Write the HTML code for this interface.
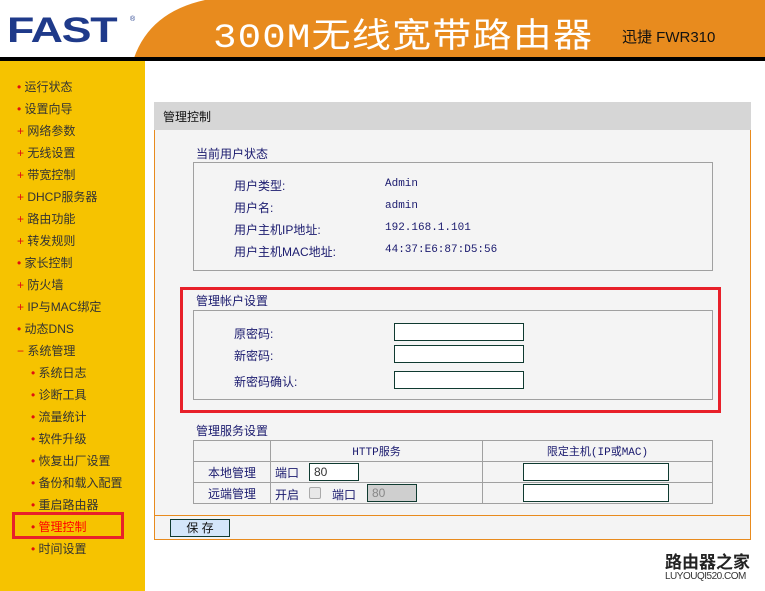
<!DOCTYPE html>
<html><head><meta charset="utf-8"><style>
*{margin:0;padding:0;box-sizing:border-box}
body{width:765px;height:591px;position:relative;background:#fff;font-family:"Liberation Sans","Noto Sans CJK SC",sans-serif;font-size:12px;overflow:hidden}
.a{position:absolute}
.nav{color:#333;font-size:12px}
.nav div{position:absolute;white-space:nowrap}
.dot{color:#e01010}
.t{color:#1a1a6e;font-size:12px;white-space:nowrap}
.mono{font-family:"Liberation Mono","Noto Sans CJK SC",monospace;font-size:11px;color:#1a1a6e}
.inp{position:absolute;background:#fff;border:1px solid #0f3a30;height:18px}
table{border-collapse:collapse}
td{border:1px solid #a0a0a0;height:21px;color:#1a1a6e;font-size:12px}
</style></head><body>
<!-- header -->
<div class="a" style="left:0;top:0;width:765px;height:58px;background:#e88b1e"></div>
<svg class="a" style="left:0;top:0" width="220" height="58"><path d="M0 0 H205 Q150 12 134 58 H0 Z" fill="#fff"/></svg>
<div class="a" style="left:7px;top:11px;font:bold 35px 'Liberation Sans',sans-serif;color:#1f3a8a;letter-spacing:-1px;transform:scaleX(1.28);transform-origin:left">FAST</div>
<div class="a" style="left:130px;top:16px;font-size:7px;color:#1f3a8a">®</div>
<div class="a" style="left:213px;top:8px;font-size:34px;color:#fff;font-family:'Liberation Mono','Noto Sans CJK SC',monospace;letter-spacing:1px;white-space:nowrap;transform:scaleX(1.15);transform-origin:left">300M无线宽带路由器</div>
<div class="a" style="left:622px;top:26px;font-size:15px;color:#111;white-space:nowrap">迅捷 FWR310</div>
<div class="a" style="left:0;top:57px;width:765px;height:4px;background:#000"></div>
<!-- sidebar -->
<div class="a" style="left:0;top:61px;width:145px;height:530px;background:#f6c300"></div>
<div class="nav">
<div style="left:17px;top:78px"><span class="dot">•</span> 运行状态</div>
<div style="left:17px;top:100px"><span class="dot">•</span> 设置向导</div>
<div style="left:17px;top:122px"><span class="dot">+</span> 网络参数</div>
<div style="left:17px;top:144px"><span class="dot">+</span> 无线设置</div>
<div style="left:17px;top:166px"><span class="dot">+</span> 带宽控制</div>
<div style="left:17px;top:188px"><span class="dot">+</span> DHCP服务器</div>
<div style="left:17px;top:210px"><span class="dot">+</span> 路由功能</div>
<div style="left:17px;top:232px"><span class="dot">+</span> 转发规则</div>
<div style="left:17px;top:254px"><span class="dot">•</span> 家长控制</div>
<div style="left:17px;top:276px"><span class="dot">+</span> 防火墙</div>
<div style="left:17px;top:298px"><span class="dot">+</span> IP与MAC绑定</div>
<div style="left:17px;top:320px"><span class="dot">•</span> 动态DNS</div>
<div style="left:17px;top:342px"><span class="dot">−</span> 系统管理</div>
<div style="left:31px;top:364px"><span class="dot">•</span> 系统日志</div>
<div style="left:31px;top:386px"><span class="dot">•</span> 诊断工具</div>
<div style="left:31px;top:408px"><span class="dot">•</span> 流量统计</div>
<div style="left:31px;top:430px"><span class="dot">•</span> 软件升级</div>
<div style="left:31px;top:452px"><span class="dot">•</span> 恢复出厂设置</div>
<div style="left:31px;top:474px"><span class="dot">•</span> 备份和载入配置</div>
<div style="left:31px;top:496px"><span class="dot">•</span> 重启路由器</div>
<div style="left:31px;top:518px;color:#f00"><span class="dot">•</span> 管理控制</div>
<div style="left:31px;top:540px"><span class="dot">•</span> 时间设置</div>
</div>
<div class="a" style="left:12px;top:512px;width:112px;height:27px;border:3px solid #e8202a"></div>
<!-- panel -->
<div class="a" style="left:154px;top:102px;width:597px;height:28px;background:#d6d6d6"></div>
<div class="a" style="left:163px;top:108px;font-size:12px;color:#111">管理控制</div>
<div class="a" style="left:154px;top:130px;width:597px;height:410px;background:#f4f4f4;border:1px solid #e88b1e;border-top:none"></div>
<div class="a" style="left:154px;top:515px;width:597px;height:1px;background:#e88b1e"></div>
<div class="t a" style="left:196px;top:145px">当前用户状态</div>
<div class="a" style="left:193px;top:162px;width:520px;height:109px;border:1px solid #a0a0a0"></div>
<div class="t a" style="left:234px;top:177px">用户类型:</div><div class="mono a" style="left:385px;top:178px">Admin</div>
<div class="t a" style="left:234px;top:199px">用户名:</div><div class="mono a" style="left:385px;top:200px">admin</div>
<div class="t a" style="left:234px;top:221px">用户主机IP地址:</div><div class="mono a" style="left:385px;top:222px">192.168.1.101</div>
<div class="t a" style="left:234px;top:243px">用户主机MAC地址:</div><div class="mono a" style="left:385px;top:244px">44:37:E6:87:D5:56</div>
<div class="a" style="left:180px;top:287px;width:541px;height:126px;border:3px solid #e8202a"></div>
<div class="t a" style="left:196px;top:292px">管理帐户设置</div>
<div class="a" style="left:193px;top:310px;width:520px;height:90px;border:1px solid #a0a0a0"></div>
<div class="t a" style="left:234px;top:325px">原密码:</div><div class="inp" style="left:394px;top:323px;width:130px"></div>
<div class="t a" style="left:234px;top:347px">新密码:</div><div class="inp" style="left:394px;top:345px;width:130px"></div>
<div class="t a" style="left:234px;top:373px">新密码确认:</div><div class="inp" style="left:394px;top:371px;width:130px"></div>
<div class="t a" style="left:196px;top:422px">管理服务设置</div>
<table class="a" style="left:193px;top:440px;width:520px">
<tr><td style="width:77px"></td><td style="width:212px;text-align:center" class="mono">HTTP服务</td><td style="text-align:center" class="mono">限定主机(IP或MAC)</td></tr>
<tr><td style="text-align:center">本地管理</td><td style="padding-left:4px">端口</td><td></td></tr>
<tr><td style="text-align:center">远端管理</td><td></td><td></td></tr>
</table>
<div class="t a" style="left:275px;top:486px">开启</div>
<div class="t a" style="left:332px;top:486px">端口</div>
<div class="inp" style="left:309px;top:463px;width:50px;font-size:12px;color:#333;padding-left:4px;line-height:16px">80</div>
<div class="a" style="left:309px;top:487px;width:12px;height:12px;border:1px solid #aaa;border-radius:2px;background:#e8e8e8"></div>
<div class="inp" style="left:367px;top:484px;width:50px;background:#cfcfcf;font-size:12px;color:#888;padding-left:4px;line-height:16px">80</div>
<div class="inp" style="left:523px;top:463px;width:146px"></div>
<div class="inp" style="left:523px;top:484px;width:146px"></div>
<div class="a" style="left:170px;top:519px;width:60px;height:18px;background:#d4e6fa;border:1px solid #0f3a30;text-align:center;font-size:12px;line-height:16px;color:#111">保 存</div>
<div class="a" style="left:665px;top:548px;font-size:17px;font-weight:bold;color:#222;white-space:nowrap">路由器之家</div>
<div class="a" style="left:665px;top:571px;font-size:10px;color:#333;letter-spacing:-0.5px">LUYOUQI520.COM</div>
</body></html>
